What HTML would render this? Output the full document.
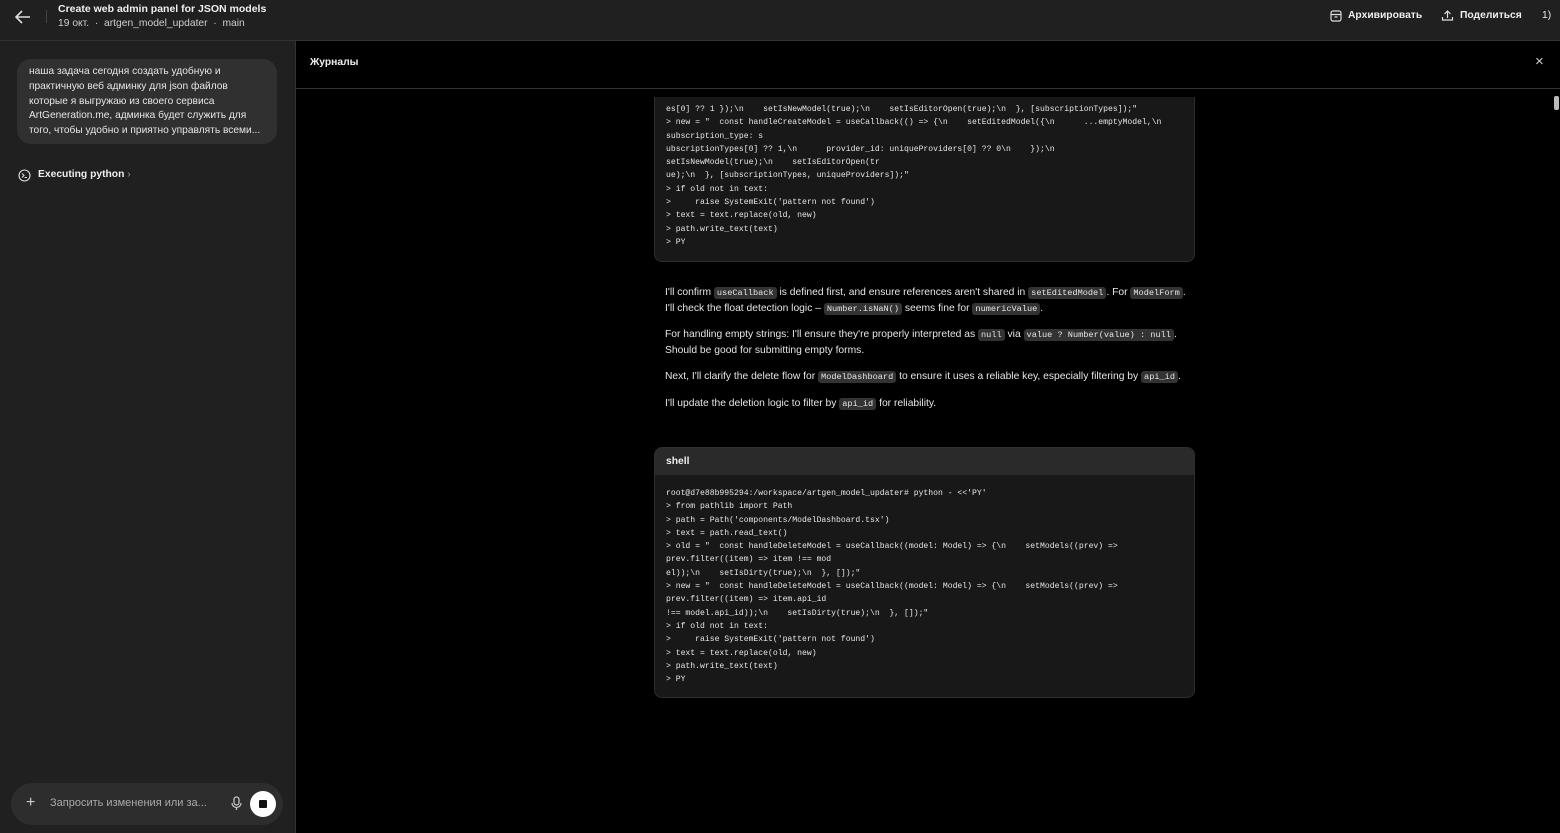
<!DOCTYPE html>
<html><head><meta charset="utf-8"><style>
*{box-sizing:border-box;margin:0;padding:0}
body{width:1560px;height:833px;overflow:hidden;background:#000;font-family:"Liberation Sans","Noto Sans CJK SC",sans-serif;color:#e8e8e8;position:relative}
.top{position:absolute;left:0;top:0;width:1560px;height:41px;background:#202020;border-bottom:1px solid #333;z-index:5}
.side{position:absolute;left:0;top:41px;width:296px;height:792px;background:#202020;border-right:1px solid #333;z-index:5}
.mono{font-family:"Liberation Mono","DejaVu Sans Mono",monospace}
.code{position:absolute;left:654px;width:541px;background:#181818;border:1px solid #2e2e2e;border-radius:8px}
.cl{position:absolute;left:11px;font-size:8.1px;white-space:pre;color:#e6e6e6;line-height:13.3px;font-family:"Liberation Mono","DejaVu Sans Mono",monospace}
.p{position:absolute;left:665px;font-size:10.3px;color:#e6e6e6;line-height:16px;white-space:nowrap}
.c{font-family:"Liberation Mono",monospace;font-size:8.6px;background:#333;border-radius:3px;padding:1px 3px}
</style></head><body>
<div class="top">
<svg style="position:absolute;left:14px;top:9px" width="18" height="16" viewBox="0 0 18 16"><path d="M16 8H2M8 2L2 8l6 6" stroke="#ddd" stroke-width="1.6" fill="none"/></svg>
<div style="position:absolute;left:46px;top:10px;width:1px;height:13px;background:#444"></div>
<div style="position:absolute;left:58px;top:3px;font-size:10.5px;font-weight:bold;color:#f0f0f0">Create web admin panel for JSON models</div>
<div style="position:absolute;left:58px;top:18px;font-size:10.3px;color:#cfcfcf">19 окт. &nbsp;·&nbsp; artgen_model_updater &nbsp;·&nbsp; main</div>
<svg style="position:absolute;left:1330px;top:10px" width="12" height="12" viewBox="0 0 12 12"><rect x="1" y="1" width="10" height="10" rx="2" stroke="#ddd" fill="none" stroke-width="1.2"/><path d="M1 4.5h10M4.5 7h3" stroke="#ddd" stroke-width="1.2"/></svg>
<div style="position:absolute;left:1348px;top:10px;font-size:10.3px;font-weight:bold;color:#eee">Архивировать</div>
<svg style="position:absolute;left:1441px;top:9px" width="13" height="13" viewBox="0 0 13 13"><path d="M6.5 9V2M3.5 5l3-3 3 3M1.5 8v3h10V8" stroke="#ddd" stroke-width="1.2" fill="none"/></svg>
<div style="position:absolute;left:1460px;top:10px;font-size:10.3px;font-weight:bold;color:#eee">Поделиться</div>
<div style="position:absolute;left:1542px;top:10px;font-size:10.3px;color:#eee">1)</div>
</div>
<div class="side">
<div style="position:absolute;left:17px;top:18px;width:260px;height:85px;background:#303030;border-radius:14px;padding:6px 12px;font-size:10.2px;line-height:14.8px;color:#e6e6e6">наша задача сегодня создать удобную и практичную веб админку для json файлов которые я выгружаю из своего сервиса ArtGeneration.me, админка будет служить для того, чтобы удобно и приятно управлять всеми...</div>
<svg style="position:absolute;left:18px;top:128px" width="13" height="13" viewBox="0 0 13 13"><circle cx="6.5" cy="6.5" r="5.5" stroke="#ddd" fill="none" stroke-width="1.1"/><path d="M4 4.5l2 2-2 2M6.5 8.5h2.5" stroke="#ddd" stroke-width="1.1" fill="none"/></svg>
<div style="position:absolute;left:38px;top:128px;font-size:10.3px;font-weight:bold;color:#eee">Executing python <span style="color:#999;font-weight:normal">›</span></div>
<div style="position:absolute;left:11px;top:742px;width:272px;height:42px;background:#2d2d2d;border-radius:21px">
<div style="position:absolute;left:15px;top:11px;font-size:16px;color:#ccc">+</div>
<div style="position:absolute;left:39px;top:14px;font-size:11px;color:#aaa">Запросить изменения или за...</div>
<svg style="position:absolute;left:220px;top:13px" width="11" height="15" viewBox="0 0 11 15"><rect x="3" y="1" width="5" height="8" rx="2.5" stroke="#ccc" fill="none" stroke-width="1.2"/><path d="M1 7a4.5 4.5 0 009 0M5.5 11.5V14" stroke="#ccc" fill="none" stroke-width="1.2"/></svg>
<div style="position:absolute;left:239px;top:8px;width:26px;height:26px;border-radius:13px;background:#fff"><div style="position:absolute;left:9px;top:9px;width:8px;height:8px;background:#111;border-radius:1px"></div></div>
</div>
</div>
<div style="position:absolute;left:296px;top:41px;width:1264px;height:48px;border-bottom:1px solid #333;background:#000;z-index:4">
<div style="position:absolute;left:14px;top:16px;font-size:10.3px;font-weight:bold;color:#eee">Журналы</div>
<div style="position:absolute;left:1239px;top:12px;font-size:15px;color:#ccc">×</div>
</div>
<div style="position:absolute;left:1554px;top:96px;width:5px;height:14px;background:#bbb;border-radius:2px"></div>
<div class="code" style="top:60px;height:202px">
<div class="cl" style="top:42px">es[0] ?? 1 });\n    setIsNewModel(true);\n    setIsEditorOpen(true);\n  }, [subscriptionTypes]);"
&gt; new = "  const handleCreateModel = useCallback(() =&gt; {\n    setEditedModel({\n      ...emptyModel,\n
subscription_type: s
ubscriptionTypes[0] ?? 1,\n      provider_id: uniqueProviders[0] ?? 0\n    });\n
setIsNewModel(true);\n    setIsEditorOpen(tr
ue);\n  }, [subscriptionTypes, uniqueProviders]);"
&gt; if old not in text:
&gt;     raise SystemExit('pattern not found')
&gt; text = text.replace(old, new)
&gt; path.write_text(text)
&gt; PY</div>
</div>
<div style="position:absolute;left:296px;top:89px;width:1258px;height:8px;background:#000;z-index:3"></div>
<div class="p" style="top:285px">I'll confirm <span class="c">useCallback</span> is defined first, and ensure references aren't shared in <span class="c">setEditedModel</span>. For <span class="c">ModelForm</span>.<br>I'll check the float detection logic – <span class="c">Number.isNaN()</span> seems fine for <span class="c">numericValue</span>.</div>
<div class="p" style="top:327px">For handling empty strings: I'll ensure they're properly interpreted as <span class="c">null</span> via <span class="c">value ? Number(value) : null</span>.<br>Should be good for submitting empty forms.</div>
<div class="p" style="top:369px">Next, I'll clarify the delete flow for <span class="c">ModelDashboard</span> to ensure it uses a reliable key, especially filtering by <span class="c">api_id</span>.</div>
<div class="p" style="top:396px">I'll update the deletion logic to filter by <span class="c">api_id</span> for reliability.</div>
<div class="code" style="top:447px;height:251px;overflow:hidden">
<div style="height:27px;background:#2a2a2a;padding:8px 11px;font-size:10.3px;font-weight:bold;color:#eee">shell</div>
<div class="cl" style="top:39px">root@d7e88b995294:/workspace/artgen_model_updater# python - &lt;&lt;'PY'
&gt; from pathlib import Path
&gt; path = Path('components/ModelDashboard.tsx')
&gt; text = path.read_text()
&gt; old = "  const handleDeleteModel = useCallback((model: Model) =&gt; {\n    setModels((prev) =&gt;
prev.filter((item) =&gt; item !== mod
el));\n    setIsDirty(true);\n  }, []);"
&gt; new = "  const handleDeleteModel = useCallback((model: Model) =&gt; {\n    setModels((prev) =&gt;
prev.filter((item) =&gt; item.api_id
!== model.api_id));\n    setIsDirty(true);\n  }, []);"
&gt; if old not in text:
&gt;     raise SystemExit('pattern not found')
&gt; text = text.replace(old, new)
&gt; path.write_text(text)
&gt; PY</div>
</div>
</body></html>
